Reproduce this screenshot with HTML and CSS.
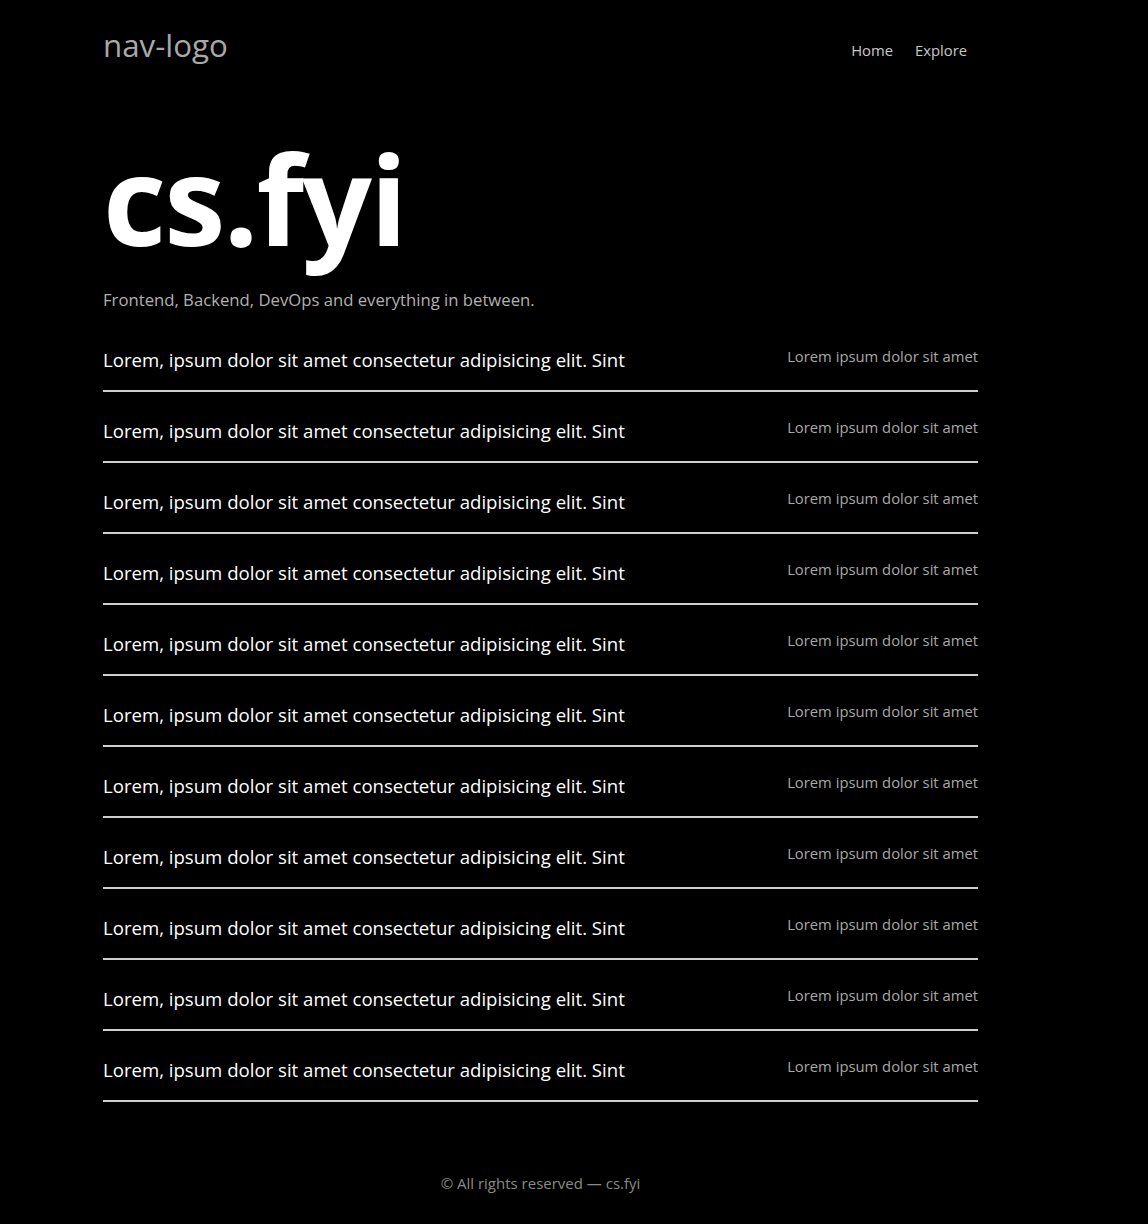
FILE: index.html
```html
<!DOCTYPE html>
<html lang="en">
<head>
<meta charset="utf-8">
<title>cs.fyi</title>
<link rel="stylesheet" href="styles.css">
</head>
<body>
<div class="container">
  <header class="nav">
    <a class="logo" href="#">nav-logo</a>
    <nav class="links">
      <a href="#">Home</a>
      <a href="#">Explore</a>
    </nav>
  </header>
  <section class="hero">
    <h1 class="title">cs.fyi</h1>
    <p class="subtitle">Frontend, Backend, DevOps and everything in between.</p>
  </section>
  <ul class="list">
    <li class="row"><span class="row-title">Lorem, ipsum dolor sit amet consectetur adipisicing elit. Sint</span><span class="row-meta">Lorem ipsum dolor sit amet</span></li>
    <li class="row"><span class="row-title">Lorem, ipsum dolor sit amet consectetur adipisicing elit. Sint</span><span class="row-meta">Lorem ipsum dolor sit amet</span></li>
    <li class="row"><span class="row-title">Lorem, ipsum dolor sit amet consectetur adipisicing elit. Sint</span><span class="row-meta">Lorem ipsum dolor sit amet</span></li>
    <li class="row"><span class="row-title">Lorem, ipsum dolor sit amet consectetur adipisicing elit. Sint</span><span class="row-meta">Lorem ipsum dolor sit amet</span></li>
    <li class="row"><span class="row-title">Lorem, ipsum dolor sit amet consectetur adipisicing elit. Sint</span><span class="row-meta">Lorem ipsum dolor sit amet</span></li>
    <li class="row"><span class="row-title">Lorem, ipsum dolor sit amet consectetur adipisicing elit. Sint</span><span class="row-meta">Lorem ipsum dolor sit amet</span></li>
    <li class="row"><span class="row-title">Lorem, ipsum dolor sit amet consectetur adipisicing elit. Sint</span><span class="row-meta">Lorem ipsum dolor sit amet</span></li>
    <li class="row"><span class="row-title">Lorem, ipsum dolor sit amet consectetur adipisicing elit. Sint</span><span class="row-meta">Lorem ipsum dolor sit amet</span></li>
    <li class="row"><span class="row-title">Lorem, ipsum dolor sit amet consectetur adipisicing elit. Sint</span><span class="row-meta">Lorem ipsum dolor sit amet</span></li>
    <li class="row"><span class="row-title">Lorem, ipsum dolor sit amet consectetur adipisicing elit. Sint</span><span class="row-meta">Lorem ipsum dolor sit amet</span></li>
    <li class="row"><span class="row-title">Lorem, ipsum dolor sit amet consectetur adipisicing elit. Sint</span><span class="row-meta">Lorem ipsum dolor sit amet</span></li>
  </ul>
  <footer class="footer">© All rights reserved — cs.fyi</footer>
</div>
</body>
</html>
```

FILE: styles.css
```css
html, body {
  margin: 0;
  padding: 0;
  background: #000;
}
body {
  font-family: "Open Sans", "Noto Sans", sans-serif;
  color: #fff;
}
a {
  text-decoration: none;
  color: inherit;
}
.container {
  width: 875px;
  margin-left: 103px;
}
.nav {
  display: flex;
  justify-content: space-between;
  align-items: center;
  height: 92px;
}
.logo {
  font-size: 31.3px;
  color: #a8a8a8;
  line-height: 40px;
  margin-top: -2px;
}
.links {
  display: flex;
  gap: 22px;
  padding-right: 11px;
  padding-top: 8px;
  font-size: 14.8px;
  color: #c8c8c8;
}
.hero {
  padding-top: 37px;
}
.title {
  margin: 0;
  font-size: 123px;
  font-weight: 700;
  line-height: 140px;
  letter-spacing: -2px;
}
.subtitle {
  margin: 19px 0 0;
  font-size: 16.7px;
  line-height: 24px;
  color: #b0b0b0;
}
.list {
  list-style: none;
  margin: 6px 0 0;
  padding: 0;
}
.row {
  display: flex;
  justify-content: space-between;
  align-items: flex-start;
  padding: 24px 0 15px;
  border-bottom: 2px solid #d0d0d0;
}
.row:first-child {
  padding-top: 27px;
}
.row-title {
  font-size: 18.6px;
  line-height: 30px;
  color: #fff;
}
.row-meta {
  font-size: 14.8px;
  line-height: 22px;
  color: #a8a8a8;
}
.footer {
  text-align: center;
  padding: 71px 0 20px;
  font-size: 15px;
  color: #8a8a8a;
}
```
